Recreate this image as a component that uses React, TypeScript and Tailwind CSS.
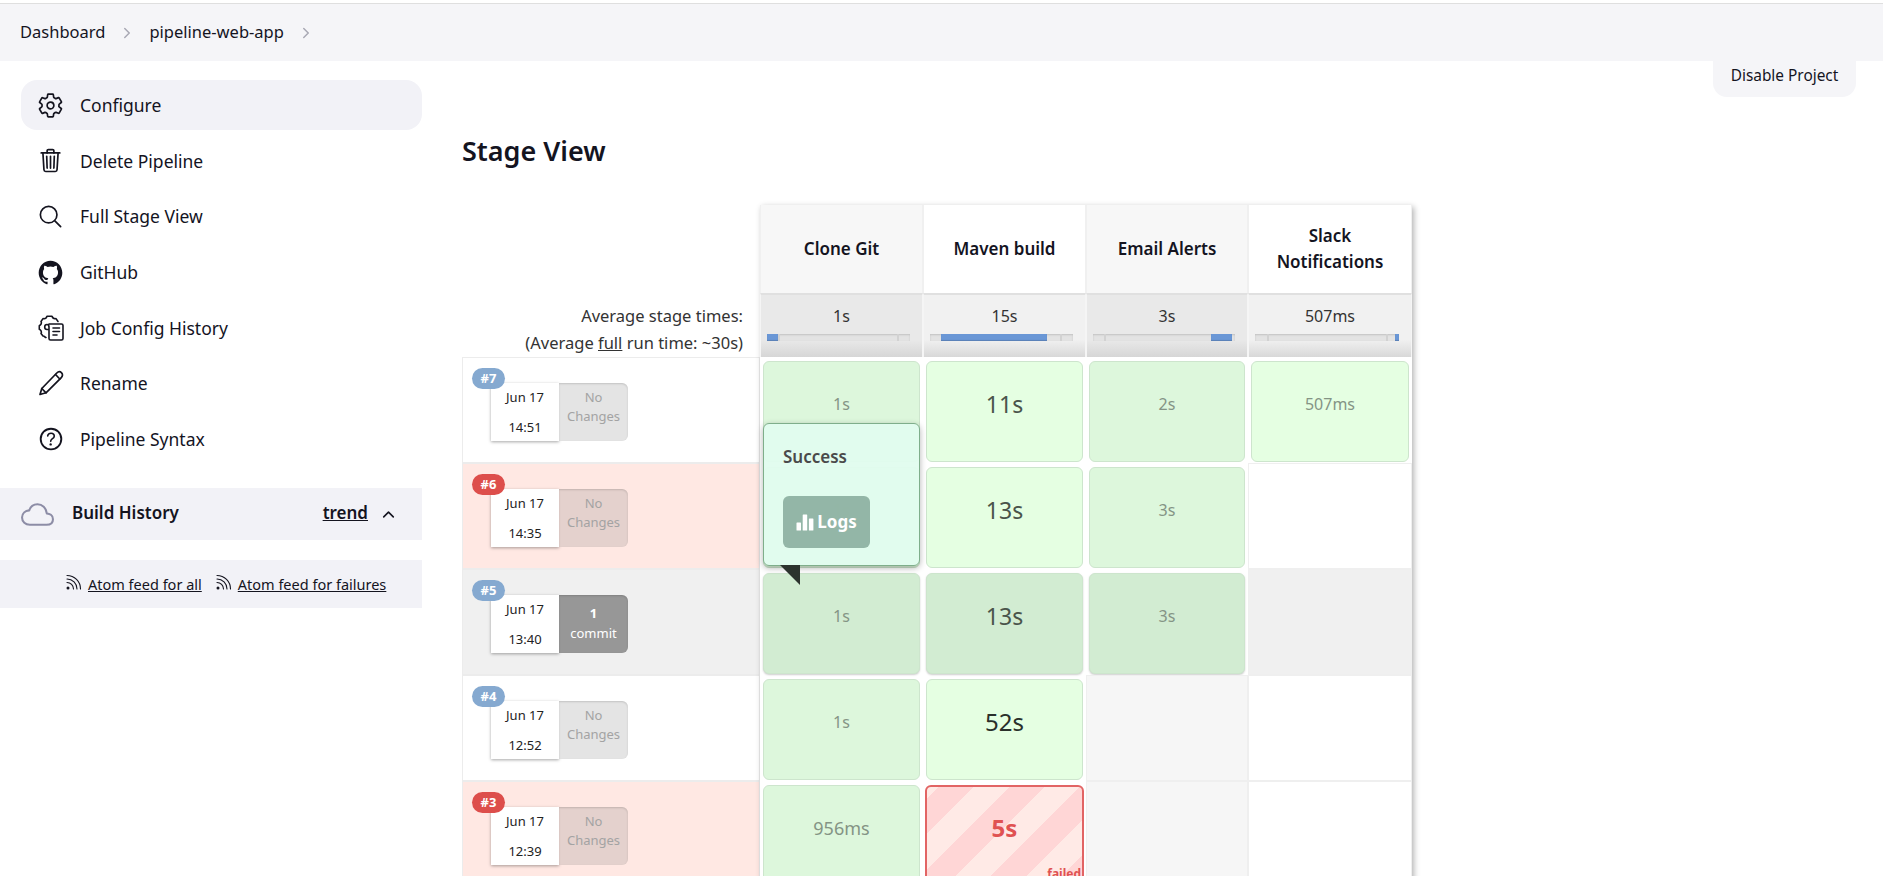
import React from "react";
import {
  IoSettingsOutline,
  IoTrashOutline,
  IoSearchOutline,
  IoLogoGithub,
  IoHelpCircleOutline,
  IoCloudOutline,
  IoChevronUp,
  IoChevronForward,
} from "react-icons/io5";

function JobConfigIcon() {
  return (
    <svg viewBox="0 0 26 26" width="26" height="26" fill="none" stroke="#14141f" strokeWidth="1.600" strokeLinejoin="round" strokeLinecap="round">
      <path d="M8 22.500C7 22.500 6.500 20.800 5 21L3 18.500C4 17 3 15 1.300 14.200V10.800C3 10 4 8 3 6.500L5 3.600C6.800 4 8.500 3 9 1.300H14C14.500 3 16 4 18 3.600L20 6.500" />
      <path d="M11 9H23.500C24.300 9 25 9.700 25 10.500V23.500C25 24.300 24.300 25 23.500 25H12.500C11.500 25 11 24.300 11 23.500V12C11 10.500 10.200 9.500 9 9.500C7.500 9.500 6.700 10.600 6.700 12C6.700 13.500 7.700 14.500 9 14.500H11" />
      <path d="M15 13H21.500M15 16.500H21.500M15 20H19" />
    </svg>
  );
}

function PencilIcon() {
  return (
    <svg viewBox="0 0 26 26" width="26" height="26" fill="none" stroke="#14141f" strokeWidth="1.700" strokeLinejoin="round" strokeLinecap="round">
      <path d="M2 24.500L3.800 18.500L18.800 3C20.200 1.600 22.300 1.500 23.600 2.800C24.900 4.100 24.700 6.200 23.300 7.600L8 22.800L2 24.500Z" />
      <path d="M3.800 18.500L8 22.800M17.500 4.500L21.800 9" />
    </svg>
  );
}

function RssIcon() {
  return (
    <svg viewBox="0 0 17 17" width="17" height="17" fill="none" stroke="#14141f" strokeWidth="1.100" strokeLinecap="round" className="-mt-[5px] shrink-0">
      <circle cx="3" cy="14" r="1.500" fill="#14141f" stroke="none" />
      <path d="M2 8.500a6.500 6.500 0 0 1 6.500 6.500" />
      <path d="M2 5a10 10 0 0 1 10 10" />
      <path d="M2 1.500a13.500 13.500 0 0 1 13.500 13.500" />
    </svg>
  );
}

function BarsIcon() {
  return (
    <svg viewBox="0 0 18 18" width="18" height="18" fill="#ffffff">
      <rect x="0.500" y="9.500" width="4.500" height="8" rx="0.600" />
      <rect x="6.700" y="1.500" width="4.500" height="16" rx="0.600" />
      <rect x="12.900" y="5.500" width="4.500" height="12" rx="0.600" />
    </svg>
  );
}

const navItems: { label: string; icon: React.ReactNode; active?: boolean }[] = [
  { label: "Configure", icon: <IoSettingsOutline size={27} />, active: true },
  { label: "Delete Pipeline", icon: <IoTrashOutline size={27} /> },
  { label: "Full Stage View", icon: <IoSearchOutline size={27} /> },
  { label: "GitHub", icon: <IoLogoGithub size={27} /> },
  { label: "Job Config History", icon: <JobConfigIcon /> },
  { label: "Rename", icon: <PencilIcon /> },
  { label: "Pipeline Syntax", icon: <IoHelpCircleOutline size={30} /> },
];

type Build = {
  id: string;
  time: string;
  failed?: boolean;
  hover?: boolean;
  commit?: boolean;
};

const builds: Build[] = [
  { id: "#7", time: "14:51" },
  { id: "#6", time: "14:35", failed: true },
  { id: "#5", time: "13:40", hover: true, commit: true },
  { id: "#4", time: "12:52" },
  { id: "#3", time: "12:39", failed: true },
];

type Cell = { text?: string; size?: "sm" | "md" | "lg" | "xl"; kind?: "fail" };

const cells: Cell[][] = [
  [{ text: "1s", size: "sm" }, { text: "11s", size: "lg" }, { text: "2s", size: "sm" }, { text: "507ms", size: "sm" }],
  [{ text: "1s", size: "sm" }, { text: "13s", size: "lg" }, { text: "3s", size: "sm" }, {}],
  [{ text: "1s", size: "sm" }, { text: "13s", size: "lg" }, { text: "3s", size: "sm" }, {}],
  [{ text: "1s", size: "sm" }, { text: "52s", size: "xl" }, {}, {}],
  [{ text: "956ms", size: "md" }, { text: "5s", kind: "fail" }, {}, {}],
];

const textClass = {
  sm: "text-[16px] text-[#849485]",
  md: "text-[18px] text-[#849485]",
  lg: "text-[23px] text-[#4a544b]",
  xl: "text-[24px] text-[#2a302b]",
};

function BuildLabel({ b }: { b: Build }) {
  return (
    <div
      className={`relative h-[106px] border border-[#ececec] ${
        b.failed ? "bg-[#ffe8e3]" : b.hover ? "bg-[#f0f0f0]" : "bg-white"
      }`}
    >
      <div
        className={`absolute left-[9px] top-[10px] z-10 flex h-[21px] w-[33px] items-center justify-center rounded-full text-[13px] font-bold text-white ${
          b.failed ? "bg-[#dd4e4b]" : "bg-[#85a9d0]"
        }`}
      >
        {b.id}
      </div>
      <div className="absolute left-[28px] top-[25px] flex h-[58px]">
        <div className="flex w-[68px] flex-col items-center justify-between bg-white py-[4px] text-[13px] leading-[20px] text-[#222] shadow-[0_1px_3px_rgba(0,0,0,0.35)]">
          <span>Jun 17</span>
          <span>{b.time}</span>
        </div>
        {b.commit ? (
          <div className="flex w-[69px] flex-col items-center justify-center rounded-r-md bg-[#979797] pb-[2px] text-[13px] leading-[20px] text-white shadow-[inset_0_1px_2px_rgba(0,0,0,0.15)]">
            <span className="font-bold">1</span>
            <span>commit</span>
          </div>
        ) : (
          <div
            className={`flex w-[69px] flex-col items-center justify-center rounded-r-md pb-[10px] text-[13px] leading-[19px] text-[#a3a3a3] shadow-[inset_0_1px_2px_rgba(0,0,0,0.15)] ${
              b.failed ? "bg-[#e4d1cd]" : "bg-[#e4e4e4]"
            }`}
          >
            <span>No</span>
            <span>Changes</span>
          </div>
        )}
      </div>
    </div>
  );
}

function StageCell({ cell, col, b }: { cell: Cell; col: number; b: Build }) {
  const shaded = col === 0 || col === 2;
  if (!cell.text) {
    return (
      <div
        className={`h-[106px] border border-[#efefef] ${
          b.hover ? "bg-[#f0f0f0]" : shaded ? "bg-[#f6f6f6]" : "bg-white"
        }`}
      />
    );
  }
  if (cell.kind === "fail") {
    return (
      <div className="h-[106px] px-[2px] pt-[4px]">
        <div className="relative flex h-[102px] w-full items-center justify-center rounded-md border-2 border-[#e26464] bg-[repeating-linear-gradient(135deg,#ffeae6_0,#ffeae6_8px,#ffd6d6_8px,#ffd6d6_33px,#ffeae6_33px,#ffeae6_50px)] pb-[16px]">
          <span className="text-[24px] font-bold text-[#e05252]">{cell.text}</span>
          <span className="absolute right-[1px] top-[79px] text-[12px] font-bold leading-[16px] text-[#e05252]">failed</span>
        </div>
      </div>
    );
  }
  const bg = b.hover ? "bg-[#d2ecd2]" : shaded ? "bg-[#ddf7dc]" : "bg-[#e5ffe2]";
  return (
    <div className="h-[106px] px-[3px] pt-[4px]">
      <div
        className={`flex h-[101px] items-center justify-center rounded-md border border-[#cde5cd] pb-[15px] ${bg} ${
          b.hover ? "shadow-[0_1px_2px_rgba(0,0,0,0.2)]" : ""
        }`}
      >
        <span className={textClass[cell.size ?? "sm"]}>{cell.text}</span>
      </div>
    </div>
  );
}

const stages: { name: React.ReactNode; avg: string; left: string; width: string; shaded: boolean }[] = [
  { name: "Clone Git", avg: "1s", left: "0%", width: "8%", shaded: true },
  { name: "Maven build", avg: "15s", left: "8%", width: "74%", shaded: false },
  { name: "Email Alerts", avg: "3s", left: "83%", width: "15%", shaded: true },
  { name: <>Slack<br />Notifications</>, avg: "507ms", left: "97%", width: "3%", shaded: false },
];

export default function App() {
  return (
    <div className="relative h-[876px] w-[1883px] overflow-hidden bg-white font-['Noto_Sans',sans-serif] text-[#14141f]">
      <div className="h-[3px] bg-white" />
      <header className="flex h-[58px] items-center border-t border-[#dfdfdf] bg-[#f5f5f8] pl-[20px] text-[16.500px]">
        <span>Dashboard</span>
        <IoChevronForward size={16} className="mx-[14px] text-[#a8a8b4]" />
        <span>pipeline-web-app</span>
        <IoChevronForward size={16} className="mx-[14px] text-[#a8a8b4]" />
      </header>

      <div className="flex">
        <aside className="w-[422px] shrink-0">
          <nav className="flex flex-col gap-[5.700px] pt-[19px]">
            {navItems.map((n) => (
              <div
                key={n.label}
                className={`ml-[21px] flex h-[50px] items-center rounded-[16px] text-[17.500px] ${n.active ? "bg-[#f2f2f7]" : ""}`}
              >
                <span className="flex w-[59px] shrink-0 items-center justify-center">{n.icon}</span>
                <span>{n.label}</span>
              </div>
            ))}
          </nav>
          <div className="mt-[24px] flex h-[52px] items-center bg-[#f2f2f7] pl-[21px] pr-[25px]">
            <IoCloudOutline size={33} className="text-[#8d8da6]" />
            <span className="ml-[18px] flex-1 pb-[2px] text-[17px] font-semibold">Build History</span>
            <span className="pb-[2px] text-[17px] font-semibold underline">trend</span>
            <IoChevronUp size={17} className="ml-[12px]" />
          </div>
          <div className="mt-[20px] flex h-[48px] items-center gap-[13px] bg-[#f2f2f7] pl-[65px] pt-[1px] text-[14.500px]">
            <span className="flex items-center gap-[6px]">
              <RssIcon />
              <span className="underline">Atom feed for all</span>
            </span>
            <span className="flex items-center gap-[6px]">
              <RssIcon />
              <span className="underline">Atom feed for failures</span>
            </span>
          </div>
        </aside>

        <main className="min-w-0 flex-1 pl-[40px] pr-[27px]">
          <div className="flex justify-end">
            <div className="flex h-[36px] w-[143px] items-center justify-center rounded-b-[14px] bg-[#f5f5f8] pb-[6px] text-[15.400px]">
              Disable Project
            </div>
          </div>
          <h2 className="mt-[36px] text-[27px] font-semibold leading-[36px]">Stage View</h2>

          <div className="mt-[36px] flex w-[950px]">
            <div className="w-[298px] shrink-0">
              <div className="h-[88px]" />
              <div className="flex h-[64px] flex-col items-end justify-center pr-[17px] pt-[8px] text-[16.500px] leading-[27px] text-[#333]">
                <span>Average stage times:</span>
                <span>
                  (Average <span className="underline">full</span> run time: ~30s)
                </span>
              </div>
              <div className="relative">
                <div className="absolute inset-x-0 top-0 h-[3px] bg-[#dcdcdc]" />
                {builds.map((b) => (
                  <BuildLabel key={b.id} b={b} />
                ))}
              </div>
            </div>

            <div className="relative w-[652px] shrink-0 shadow-[2px_2px_6px_rgba(0,0,0,0.3)]">
              <div className="grid grid-cols-[163px_163px_162px_164px]">
                {stages.map((s, i) => (
                  <div
                    key={i}
                    className={`flex h-[88px] items-center justify-center border-x border-[#f0f0f0] text-center text-[17px] font-semibold leading-[26px] ${s.shaded ? "bg-[#f7f7f7]" : "bg-white"}`}
                  >
                    <span>{s.name}</span>
                  </div>
                ))}
                {stages.map((s, i) => (
                  <div
                    key={i}
                    className={`h-[64px] border-x border-t-[2px] border-x-[#f5f5f5] border-t-[#e0e0e0] pl-[6px] pr-[12px] ${
                      s.shaded
                        ? "bg-[linear-gradient(#e9e9e9_0,#e9e9e9_72%,#d6d6d6_100%)]"
                        : "bg-[linear-gradient(#f1f1f1_0,#f1f1f1_72%,#d8d8d8_100%)]"
                    }`}
                  >
                    <div className="pl-[6px] pt-[11px] text-center text-[16px] leading-[20px] text-[#333]">{s.avg}</div>
                    <div className="relative mt-[8px] h-[7px] bg-[#e3e3e3] shadow-[inset_0_1px_2px_rgba(0,0,0,0.15)]">
                      <div className="absolute inset-y-0 left-[8%] w-[2px] bg-[#d2d2d2]" />
                      <div className="absolute inset-y-0 left-[91%] w-[2px] bg-[#d2d2d2]" />
                      <div
                        className="absolute inset-y-0 bg-[#6a97d6] shadow-[inset_0_-1px_1px_rgba(0,0,0,0.15)]"
                        style={{ left: s.left, width: s.width }}
                      />
                    </div>
                  </div>
                ))}
              </div>
              <div className="grid grid-cols-[163px_163px_162px_164px]">
                {builds.map((b, r) =>
                  cells[r].map((c, i) => <StageCell key={`${r}-${i}`} cell={c} col={i} b={b} />)
                )}
              </div>

              <div className="absolute left-[3px] top-[218px] z-20 h-[143px] w-[157px] rounded-md border border-[#7fae8b] bg-[#e0fcee]/95 shadow-[0_2px_6px_rgba(0,0,0,0.3)]">
                <div className="pl-[19px] pt-[21px] text-[17px] font-semibold leading-[24px] text-[#4a4a4a]">Success</div>
                <div className="ml-[19px] mt-[27px] flex h-[52px] w-[87px] items-center justify-center gap-[3px] rounded-md bg-[#8bae9f]/90 text-[17px] font-bold text-white">
                  <BarsIcon />
                  <span>Logs</span>
                </div>
                <svg viewBox="0 0 20 20" width="20" height="20" className="absolute left-[16px] top-[141px]">
                  <polygon points="0,0 20,0 20,20" fill="#2c332e" />
                </svg>
              </div>
            </div>
          </div>
        </main>
      </div>
    </div>
  );
}
